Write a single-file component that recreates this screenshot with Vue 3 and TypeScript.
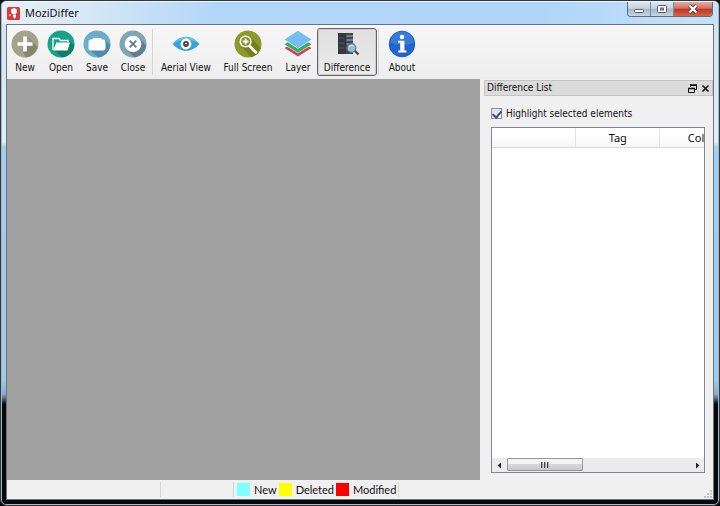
<script setup lang="ts">
import { ref } from 'vue'

type Tool = { id: string; label: string; size?: 'medium' | 'roomy' | 'large' | 'wide'; split?: boolean }

const tools: Tool[] = [
  { id: 'new', label: 'New' },
  { id: 'open', label: 'Open' },
  { id: 'save', label: 'Save' },
  { id: 'close', label: 'Close' },
  { id: 'aerial', label: 'Aerial View', size: 'wide', split: true },
  { id: 'full', label: 'Full Screen', size: 'wide' },
  { id: 'layer', label: 'Layer', size: 'medium' },
  { id: 'difference', label: 'Difference', size: 'large' },
  { id: 'about', label: 'About', size: 'roomy', split: true },
]

const legend = [
  { name: 'New', kind: 'added' },
  { name: 'Deleted', kind: 'deleted' },
  { name: 'Modified', kind: 'modified' },
]

const columns = ['', 'Tag', 'Color']
const showDifference = ref(true)
const highlight = ref(true)

function press(id: string) {
  if (id === 'difference') showDifference.value = !showDifference.value
}
</script>

<template>
  <div class="window">
    <header class="titlebar">
      <svg class="app-icon" viewBox="0 0 13 13" aria-hidden="true">
        <rect width="13" height="13" rx="1.5" fill="#d93a3d" />
        <circle cx="7" cy="4.2" r="3" fill="#fff" />
        <path d="M6 7.5h3v2.2l-1.4 2L6 10z" fill="#fff" />
        <circle cx="3" cy="8.2" r="1.1" fill="#f5b9ba" />
      </svg>
      <h1 class="title">MoziDiffer</h1>
      <div class="caption">
        <button class="cap" type="button" aria-label="Minimize">
          <svg viewBox="0 0 14 12"><rect x="2.5" y="6.5" width="9" height="3" rx="1" fill="#fff" stroke="#535d69" /></svg>
        </button>
        <button class="cap" type="button" aria-label="Maximize">
          <svg viewBox="0 0 14 12">
            <rect x="2.5" y="2.5" width="9" height="7" rx="1" fill="#fff" stroke="#535d69" />
            <rect x="5.5" y="5" width="3" height="2" fill="#b4c2d1" stroke="#535d69" />
          </svg>
        </button>
        <button class="cap cap-close" type="button" aria-label="Close window">
          <svg viewBox="0 0 14 12">
            <path d="M3.5 2.5l7 7M10.5 2.5l-7 7" stroke="#5c3a3c" stroke-width="4" />
            <path d="M3.5 2.5l7 7M10.5 2.5l-7 7" stroke="#fff" stroke-width="2.3" />
          </svg>
        </button>
      </div>
    </header>

    <main class="client">
      <nav class="toolbar" aria-label="Main toolbar">
        <template v-for="t in tools" :key="t.id">
          <span v-if="t.split" class="divider"></span>
          <button
            type="button"
            class="tool"
            :class="[t.size, { pressed: t.id === 'difference' && showDifference }]"
            @click="press(t.id)"
          >
            <svg v-if="t.id === 'new'" viewBox="0 0 28 28">
              <circle cx="14" cy="14" r="13.5" fill="#a3a38a" />
              <path d="M16 6l10.4 11A13.5 13.5 0 0 1 15 27.5L12 22l4-6h6z" fill="#87876f" />
              <path d="M14 6.5v15M6.5 14h15" stroke="#fff" stroke-width="3.6" />
            </svg>
            <svg v-else-if="t.id === 'open'" viewBox="0 0 28 28">
              <circle cx="14" cy="14" r="13.5" fill="#16a387" />
              <path d="M22.500 11l4.800 4.500A13.500 13.500 0 0 1 15 27.500L7 20z" fill="#0d8069" />
              <path d="M6 20V8.500h6l1.500 2H21V12" fill="none" stroke="#fff" stroke-width="1.300" />
              <path d="M9.300 12.500H23L20.500 20.500H6.300z" fill="#fff" />
            </svg>
            <svg v-else-if="t.id === 'save'" viewBox="0 0 28 28">
              <circle cx="14" cy="14" r="13.5" fill="#68adcb" />
              <path d="M22 10l5.300 5A13.500 13.500 0 0 1 15.500 27.400L7 20z" fill="#4d8cad" />
              <rect x="5.500" y="9.500" width="17" height="11" rx="2.200" fill="#fff" />
              <path d="M9.500 10V8.700Q9.500 8 10.500 8h7Q18.500 8 18.500 8.700V10" fill="#fff" />
            </svg>
            <svg v-else-if="t.id === 'close'" viewBox="0 0 28 28">
              <circle cx="14" cy="14" r="13.5" fill="#82a5b6" />
              <path d="M20 8l7.300 7.500A13.500 13.500 0 0 1 15.500 27.400L8 20z" fill="#627f91" />
              <circle cx="14" cy="14" r="8.300" fill="#fff" />
              <path d="M10.700 10.700l6.600 6.600M17.300 10.700l-6.600 6.600" stroke="#617f90" stroke-width="1.900" />
            </svg>
            <svg v-else-if="t.id === 'aerial'" viewBox="0 0 28 28">
              <path d="M0.500 14Q7 6.800 14 6.800T27.500 14Q21 21 14 21T0.500 14z" fill="#36a4da" />
              <path d="M0.500 14Q7 6.800 14 6.800T27.500 14Q21 9.500 14 9.500T0.500 14z" fill="#65c1e8" />
              <circle cx="14" cy="14" r="5.400" fill="#fff" />
              <circle cx="14" cy="14" r="2.900" fill="#46423e" />
              <circle cx="14" cy="13.600" r="0.900" fill="#fff" />
            </svg>
            <svg v-else-if="t.id === 'full'" viewBox="0 0 28 28">
              <circle cx="14" cy="14" r="13.5" fill="#8c9a2c" />
              <path d="M16 7l10.800 11A13.500 13.500 0 0 1 17 27.200L8 17z" fill="#717f20" />
              <path d="M15.500 16l6.300 6.300" stroke="#fff" stroke-width="3" stroke-linecap="round" />
              <circle cx="11.600" cy="11.500" r="5.300" fill="#7c8a27" stroke="#fff" stroke-width="1.500" />
              <path d="M11.600 8.500v6M8.600 11.500h6" stroke="#fff" stroke-width="1.900" />
            </svg>
            <svg v-else-if="t.id === 'layer'" viewBox="0 0 28 28">
              <path d="M0.500 18L14 10l13.500 8L14 26.500z" fill="#d23f64" />
              <path d="M0.500 15L14 7l13.500 8L14 23.300z" fill="#f4f4f4" />
              <path d="M0.500 14.200L14 6l13.500 8.200L14 22.700z" fill="#35b05a" />
              <path d="M0.500 10.300L14 2l13.500 8.300L14 18.700z" fill="#eef6f2" />
              <path d="M0.500 9.500L14 0.800l13.500 8.700L14 18z" fill="#72bdf1" />
            </svg>
            <svg v-else-if="t.id === 'difference'" viewBox="0 0 28 28">
              <path d="M5 3h8v21H5z" fill="#34373f" />
              <path d="M13 3h7v21h-7z" fill="#3f4754" />
              <path d="M6 8h5M6 13h5M6 18h5" stroke="#555965" />
              <path d="M13.500 6H20M13.500 10H20M13.500 14H20M13.500 18H17" stroke="#8297aa" stroke-width="1.300" />
              <path d="M21.500 20.500l4 4" stroke="#404753" stroke-width="2.300" />
              <circle cx="18.500" cy="18" r="4.300" fill="#9fbcca" stroke="#5e7586" stroke-width="1.200" />
              <path d="M16 17q2-2.500 4.500-1" fill="none" stroke="#e3f0f5" />
            </svg>
            <svg v-else viewBox="0 0 28 28">
              <circle cx="14" cy="14" r="13.200" fill="#2164cc" />
              <path d="M2.500 13a11.500 11.500 0 0 1 23 0Q14 17 2.500 13z" fill="#3979dc" />
              <circle cx="14" cy="7" r="2.300" fill="#fff" />
              <path d="M10 10.800h6.400v9.700h2v2h-8.400v-2h2.200v-7.700h-2.200z" fill="#fff" />
            </svg>
            <span>{{ t.label }}</span>
          </button>
        </template>
      </nav>

      <div class="workspace">
        <section class="canvas" aria-label="Drawing"></section>

        <aside v-if="showDifference" class="dock">
          <div class="dock-title">
            <h2>Difference List</h2>
            <button type="button" aria-label="Float">
              <svg viewBox="0 0 9 9">
                <path d="M2.500 3V1.500h6v4H7" fill="none" stroke="#111" />
                <path d="M2 1h7" stroke="#111" stroke-width="1.600" />
                <path d="M0.500 4.500h6v4h-6z" fill="#ddd" stroke="#111" />
                <path d="M0 4.500h7" stroke="#111" stroke-width="1.600" />
              </svg>
            </button>
            <button type="button" aria-label="Close panel">
              <svg viewBox="0 0 9 9"><path d="M1.500 1.500l6 6M7.500 1.500l-6 6" stroke="#111" stroke-width="1.600" /></svg>
            </button>
          </div>
          <div class="dock-body">
            <label class="check" for="highlight">
              <input id="highlight" v-model="highlight" type="checkbox" />
              <span>Highlight selected elements</span>
            </label>
            <div class="list">
              <div class="list-view">
                <table>
                  <thead>
                    <tr>
                      <th v-for="(c, i) in columns" :key="i" scope="col">{{ c }}</th>
                    </tr>
                  </thead>
                  <tbody></tbody>
                </table>
              </div>
              <div class="scroll">
                <button type="button" aria-label="Scroll left">
                  <svg viewBox="0 0 14 13"><path d="M9 3.500v6l-3.500-3z" fill="#222" /></svg>
                </button>
                <div class="track">
                  <div class="thumb"><i></i><i></i><i></i></div>
                </div>
                <button type="button" aria-label="Scroll right">
                  <svg viewBox="0 0 14 13"><path d="M7 3.500v6l3.500-3z" fill="#222" /></svg>
                </button>
              </div>
            </div>
          </div>
        </aside>
      </div>

      <footer class="status">
        <span class="cell cell-main"></span>
        <span class="cell cell-side"></span>
        <ul class="legend">
          <li v-for="l in legend" :key="l.name">
            <span class="swatch" :class="l.kind"></span>{{ l.name }}
          </li>
        </ul>
        <svg class="grip" viewBox="0 0 9 9" aria-hidden="true">
          <path d="M7 0h2v2h-2zM7 3h2v2h-2zM7 6h2v2h-2zM4 3h2v2h-2zM4 6h2v2h-2zM1 6h2v2h-2z" fill="#c4c4c4" />
        </svg>
      </footer>
    </main>
  </div>
</template>

<style>
body {
  background: #05090c;
}
</style>

<style scoped>
* {
  box-sizing: border-box;
}

button {
  margin: 0;
  padding: 0;
  border: 0;
  background: none;
  font: inherit;
  color: inherit;
}

.window {
  display: flex;
  flex-direction: column;
  min-height: 100vh;
  padding: 0 5px 5px;
  border: 1px solid #30363d;
  border-radius: 6px;
  box-shadow: inset 0 0 0 1px #a9b8c2;
  background: linear-gradient(#cfe3f4, #e0eef8 28%, #a2cef5 29%, #9fcbf1 75%, #87add0 78%, #05090c 80%);
  font-family: "Noto Sans", "Open Sans", sans-serif;
  font-size: 11px;
  color: #111;
}

.titlebar {
  display: flex;
  align-items: center;
  height: 23px;
  margin: 0 -4px;
  padding: 0 5px;
  border-top: 1px solid #edf7ff;
  border-radius: 5px 5px 0 0;
  background: linear-gradient(90deg, #e8f0f4, #d6e7f5 12%, #b2d6f8 30%, #b0d5f8 75%, #c5e2fa);
}

.app-icon {
  width: 13px;
  height: 13px;
}

.title {
  flex: 1;
  align-self: flex-start;
  margin: 0 0 0 5px;
  font-size: 11px;
  font-weight: 400;
  line-height: 21px;
}

.caption {
  display: flex;
  align-self: flex-start;
  height: 15px;
  border: 1px solid #5f6c79;
  border-top: 0;
  border-radius: 0 0 4px 4px;
  overflow: hidden;
}

.cap {
  display: grid;
  place-items: center;
  width: 23px;
  border-right: 1px solid #7b8895;
  background: linear-gradient(#dce7f1, #c5d3e0 45%, #a5b6c7 50%, #c3d5e6);
}

.cap svg {
  width: 14px;
  height: 12px;
}

.cap-close {
  width: 38px;
  border-right: 0;
  background: linear-gradient(#e5aaa0, #d37163 45%, #bd3520 50%, #d5664b);
}

.client {
  display: flex;
  flex: 1;
  flex-direction: column;
  border: 1px solid #69747d;
  background: #f0f0f0;
}

.toolbar {
  display: flex;
  align-items: center;
  height: 54px;
  background: linear-gradient(#f7f7f7, #eeeeee);
  font-family: "DejaVu Sans Condensed", "DejaVu Sans", sans-serif;
  font-size: 10px;
}

.tool {
  display: flex;
  flex-direction: column;
  align-items: center;
  justify-content: space-between;
  width: 36px;
  height: 48px;
  padding: 1px 0 0;
  border: 1px solid transparent;
  white-space: nowrap;
  line-height: 14px;
}

.tool svg {
  width: 28px;
  height: 28px;
}

.medium {
  width: 38px;
}

.roomy {
  width: 42px;
}

.large {
  width: 60px;
}

.wide {
  width: 62px;
}

.pressed {
  border-color: #68656a;
  border-radius: 3px;
  background: linear-gradient(#dfdfdf, #ececec);
  box-shadow: inset 0 0 1px 1px #cdcdcd;
}

.divider {
  width: 1px;
  height: 46px;
  margin: 0 2px 0 1px;
  background: #d5d5d5;
}

.workspace {
  display: flex;
  flex: 1;
}

.canvas {
  flex: 1;
  background: #a0a0a0;
}

.dock {
  display: flex;
  flex-direction: column;
  width: 33%;
  padding: 1px 0 0 4px;
  font-family: "DejaVu Sans Condensed", "DejaVu Sans", sans-serif;
  font-size: 10px;
}

.dock-title {
  display: flex;
  align-items: center;
  gap: 4px;
  height: 16px;
  padding: 0 2px;
  border: 1px solid #c4c4c4;
  background: #dcdcdc;
}

.dock-title h2 {
  flex: 1;
  margin: 0;
  font-size: 10px;
  font-weight: 400;
  line-height: 14px;
}

.dock-title button,
.dock-title svg {
  display: block;
  width: 9px;
  height: 9px;
}

.dock-body {
  display: flex;
  flex: 1;
  flex-direction: column;
  gap: 5px;
  padding: 9px 8px 7px 7px;
}

.check {
  display: flex;
  align-items: center;
  gap: 4px;
  height: 17px;
}

.check input {
  appearance: none;
  display: grid;
  place-items: center;
  width: 11px;
  height: 11px;
  margin: 0;
  border: 1px solid #8d9094;
  background: linear-gradient(135deg, #d6dbe2, #fafafa);
}

.check input:checked::before {
  content: "";
  width: 4px;
  height: 7px;
  margin-bottom: 2px;
  border: solid #3a4f92;
  border-width: 0 2px 2px 0;
  transform: rotate(40deg);
}

.list {
  display: flex;
  flex: 1;
  flex-direction: column;
  border: 1px solid #828790;
  background: #fff;
}

.list-view {
  flex: 1;
  overflow: hidden;
}

table {
  width: 252px;
  table-layout: fixed;
  border-collapse: collapse;
}

th {
  height: 19px;
  padding: 0;
  border-right: 1px solid #e2e3e5;
  border-bottom: 1px solid #d9dadb;
  background: linear-gradient(#fff 40%, #f5f6f7);
  font-family: "Noto Sans", sans-serif;
  font-size: 11px;
  font-weight: 400;
}

.scroll {
  display: flex;
  height: 14px;
  background: #ececec;
}

.scroll button {
  width: 15px;
}

.scroll svg {
  display: block;
  width: 14px;
  height: 13px;
}

.track {
  flex: 1;
}

.thumb {
  display: flex;
  align-items: center;
  justify-content: center;
  gap: 1px;
  width: 42%;
  height: 13px;
  border: 1px solid #979797;
  border-radius: 1px;
  background: linear-gradient(#f3f3f3 45%, #d7d7d7 50%, #c9c9c9);
}

.thumb i {
  width: 2px;
  height: 6px;
  border-left: 1px solid #444;
  background: #aaa;
}

.status {
  display: flex;
  align-items: center;
  height: 19px;
  font-family: Lato, sans-serif;
}

.cell {
  height: 15px;
  border-right: 1px solid #d5d5d5;
}

.cell-main {
  width: 154px;
}

.cell-side {
  width: 73px;
}

.legend {
  display: flex;
  gap: 2px;
  margin: 0;
  padding: 0 2px 0 3px;
  border-right: 1px solid #d5d5d5;
  list-style: none;
  line-height: 15px;
}

.legend li {
  display: flex;
  align-items: center;
  gap: 4px;
}

.swatch {
  width: 13px;
  height: 13px;
}

.added {
  background: #80ffff;
}

.deleted {
  background: #ffff00;
}

.modified {
  background: #ff0000;
}

.grip {
  align-self: flex-end;
  width: 9px;
  height: 9px;
  margin: 0 1px 0 auto;
}
</style>
